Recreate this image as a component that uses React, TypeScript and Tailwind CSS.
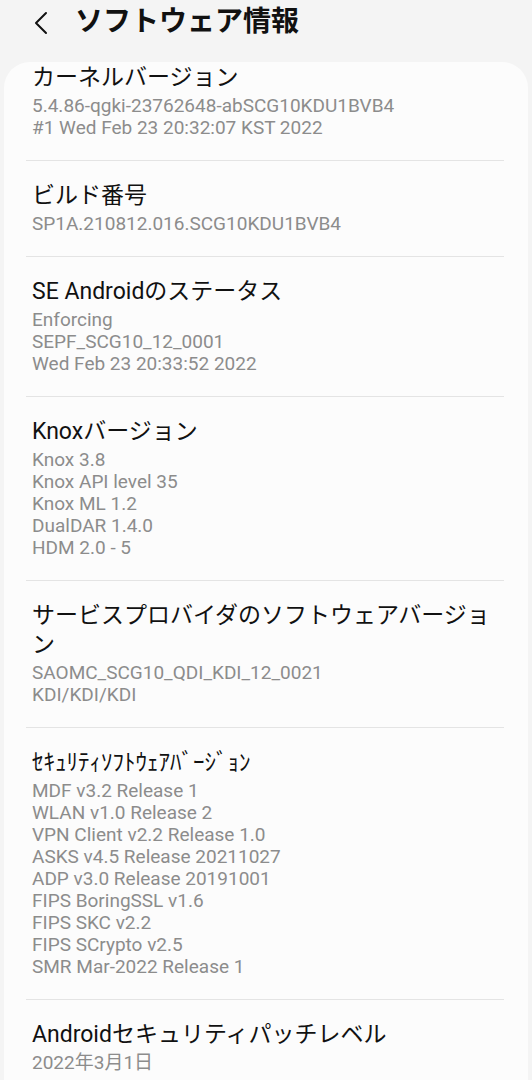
import React from "react";

type Item = { title: string[]; lines: string[] };

const items: Item[] = [
  {
    title: ["カーネルバージョン"],
    lines: ["5.4.86-qgki-23762648-abSCG10KDU1BVB4", "#1 Wed Feb 23 20:32:07 KST 2022"],
  },
  { title: ["ビルド番号"], lines: ["SP1A.210812.016.SCG10KDU1BVB4"] },
  {
    title: ["SE Androidのステータス"],
    lines: ["Enforcing", "SEPF_SCG10_12_0001", "Wed Feb 23 20:33:52 2022"],
  },
  {
    title: ["Knoxバージョン"],
    lines: ["Knox 3.8", "Knox API level 35", "Knox ML 1.2", "DualDAR 1.4.0", "HDM 2.0 - 5"],
  },
  {
    title: ["サービスプロバイダのソフトウェアバージョ", "ン"],
    lines: ["SAOMC_SCG10_QDI_KDI_12_0021", "KDI/KDI/KDI"],
  },
  {
    title: ["ｾｷｭﾘﾃｨｿﾌﾄｳｪｱﾊﾞｰｼﾞｮﾝ"],
    lines: [
      "MDF v3.2 Release 1",
      "WLAN v1.0 Release 2",
      "VPN Client v2.2 Release 1.0",
      "ASKS v4.5 Release 20211027",
      "ADP v3.0 Release 20191001",
      "FIPS BoringSSL v1.6",
      "FIPS SKC v2.2",
      "FIPS SCrypto v2.5",
      "SMR Mar-2022 Release 1",
    ],
  },
  { title: ["Androidセキュリティパッチレベル"], lines: ["2022年3月1日"] },
];

const font = { fontFamily: '"Roboto", "Noto Sans CJK JP", sans-serif' };

export default function App() {
  return (
    <div className="h-[1080px] w-[532px] overflow-hidden bg-[#f4f4f4]" style={font}>
      <header className="flex h-[62px] items-start pt-[6px]">
        <svg width="28" height="32" viewBox="0 0 28 32" className="ml-[27px] mt-[1px]">
          <polyline points="19,6 9,16 19,26" fill="none" stroke="#111" strokeWidth="2" strokeLinecap="round" strokeLinejoin="round" />
        </svg>
        <h1 className="ml-[20px] text-[28px] font-bold leading-[32px] text-[#111]">ソフトウェア情報</h1>
      </header>
      <div className="mx-1 rounded-t-[26px] bg-[#fcfcfc]">
        {items.map((it, i) => (
          <div key={i}>
            {i > 0 && <div className="ml-[22px] mr-[24px] h-px bg-[#e4e4e4]" />}
            <div className={`px-[28px] pb-[21px] ${i === 0 ? "pt-[1px]" : "pt-[20px]"}`}>
              <div className="text-[23px] leading-[29px] text-[#111]">
                {it.title.map((t, j) => (
                  <div key={j} className="h-[29px]">{t}</div>
                ))}
              </div>
              <div className="mt-[3px] text-[19px] leading-[22px] text-[#8c8c8c]">
                {it.lines.map((l, j) => (
                  <div key={j} className="h-[22px]">{l}</div>
                ))}
              </div>
            </div>
          </div>
        ))}
      </div>
    </div>
  );
}
